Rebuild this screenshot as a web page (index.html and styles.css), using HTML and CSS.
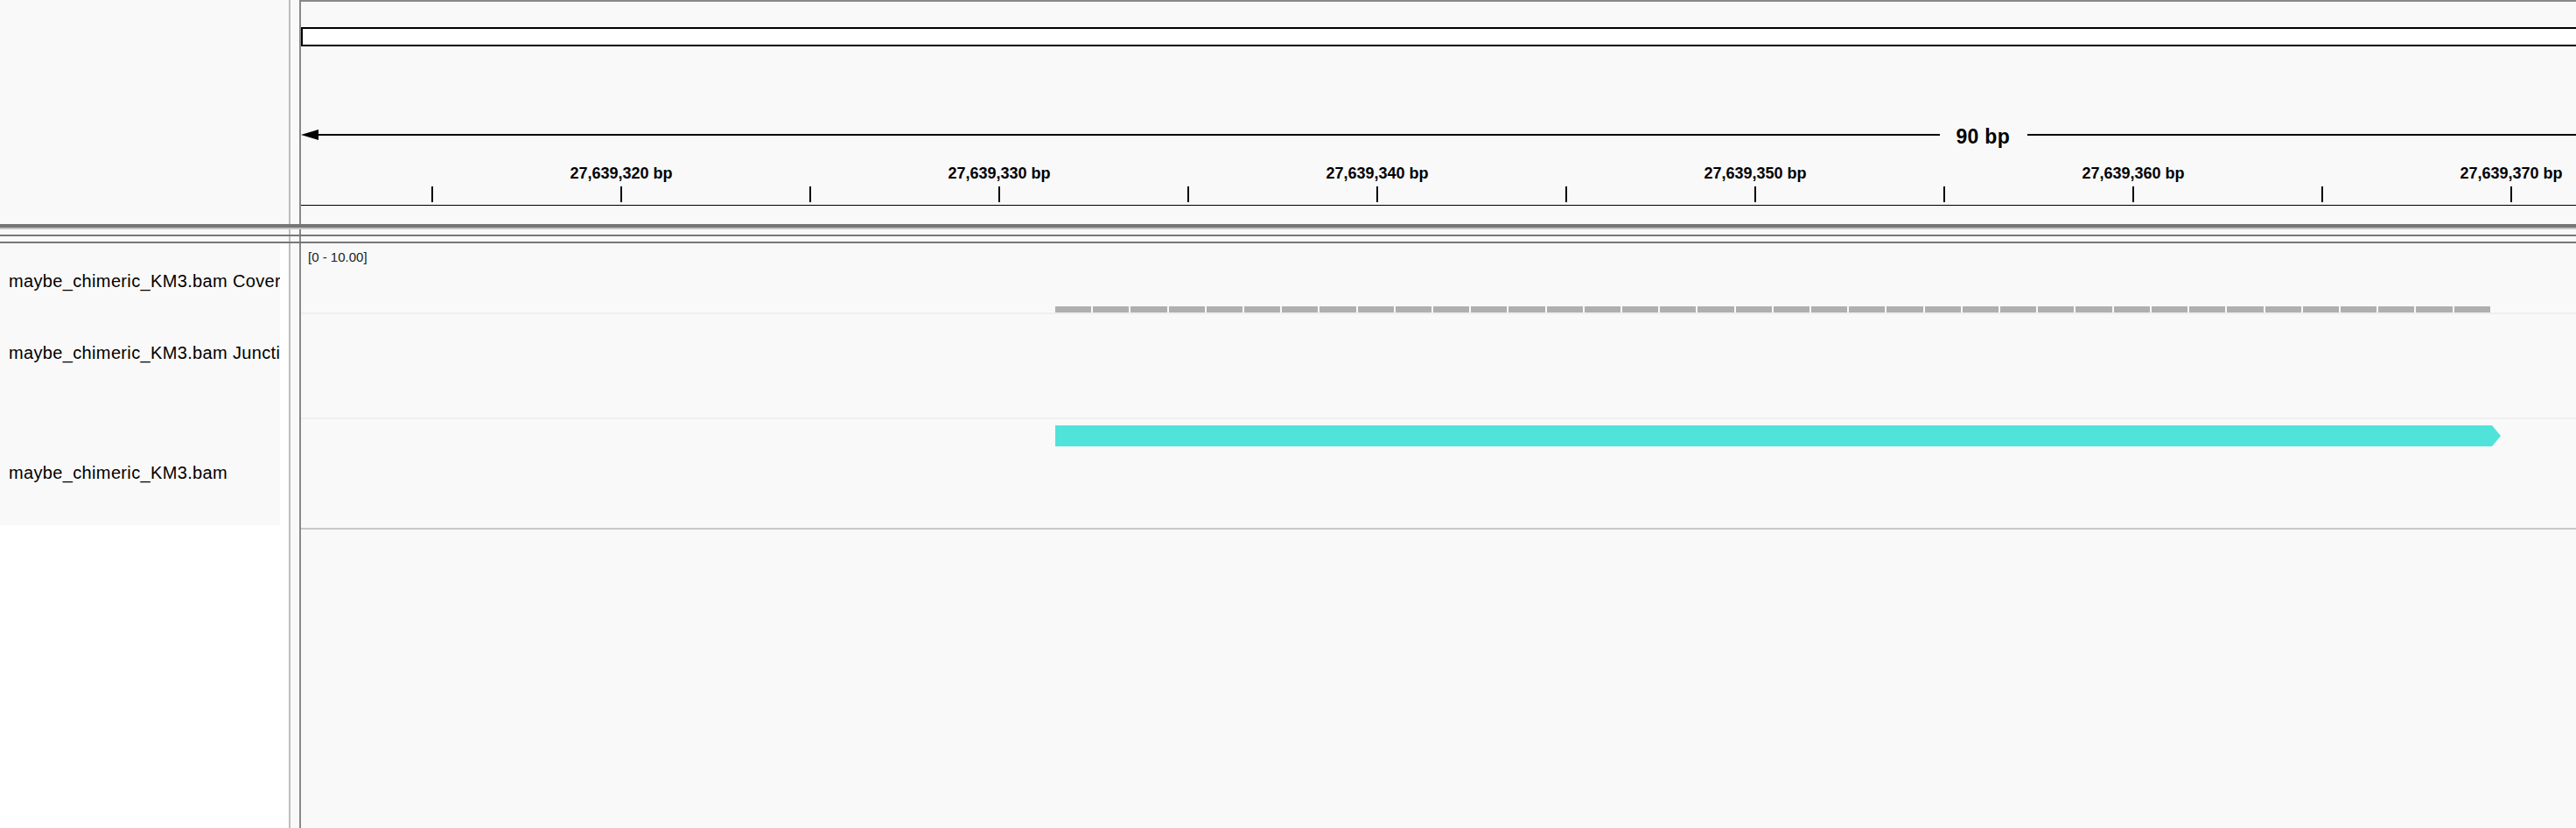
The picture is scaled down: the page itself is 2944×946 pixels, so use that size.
FILE: index.html
```html
<!DOCTYPE html>
<html lang="en">
<head>
<meta charset="utf-8">
<title>IGV</title>
<link rel="stylesheet" href="styles.css">
</head>
<body>
<div class="app">
  <section class="row header">
    <div class="name-col"></div>
    <div class="vl-light"></div>
    <div class="gutter"></div>
    <div class="vl-dark"></div>
    <div class="ruler">
      <div class="ideogram"></div>
      <div class="scale">
        <svg class="arrowhead" width="20" height="12" viewBox="0 0 20 12"><polygon points="0,6 20,0 20,12" fill="#000"/></svg>
        <div class="scale-line"></div>
        <div class="scale-label">90 bp</div>
        <div class="scale-line"></div>
        <svg class="arrowhead" width="20" height="12" viewBox="0 0 20 12"><polygon points="20,6 0,0 0,12" fill="#000"/></svg>
      </div>
      <div class="labels">
        <div class="lab">27,639,320 bp</div>
        <div class="lab">27,639,330 bp</div>
        <div class="lab">27,639,340 bp</div>
        <div class="lab">27,639,350 bp</div>
        <div class="lab">27,639,360 bp</div>
        <div class="lab">27,639,370 bp</div>
      </div>
      <div class="ticks">
        <div class="tick"></div><div class="tick"></div><div class="tick"></div><div class="tick"></div>
        <div class="tick"></div><div class="tick"></div><div class="tick"></div><div class="tick"></div>
        <div class="tick"></div><div class="tick"></div><div class="tick"></div><div class="tick"></div>
      </div>
      <div class="rule"></div>
    </div>
  </section>

  <div class="hl thick"></div>
  <div class="hl soft"></div>
  <div class="row spacer"><div class="name-col"></div><div class="vl-light"></div><div class="gutter"></div><div class="vl-dark"></div><div class="data-bg"></div></div>
  <div class="hl"></div>
  <div class="row spacer"><div class="name-col"></div><div class="vl-light"></div><div class="gutter"></div><div class="vl-dark"></div><div class="data-bg"></div></div>
  <div class="hl"></div>

  <section class="row tracks">
    <div class="names">
      <div class="name-list">
        <div class="name name-cov">maybe_chimeric_KM3.bam Coverage</div>
        <div class="name name-junc">maybe_chimeric_KM3.bam Junctions</div>
        <div class="name name-aln">maybe_chimeric_KM3.bam</div>
      </div>
    </div>
    <div class="vl-light"></div>
    <div class="gutter"></div>
    <div class="vl-dark"></div>
    <div class="data">
      <div class="cov">
        <div class="range">[0 - 10.00]</div>
        <div class="cov-bars">
          <span></span><span></span><span></span><span></span><span></span><span></span><span></span><span></span><span></span><span></span>
          <span></span><span></span><span></span><span></span><span></span><span></span><span></span><span></span><span></span><span></span>
          <span></span><span></span><span></span><span></span><span></span><span></span><span></span><span></span><span></span><span></span>
          <span></span><span></span><span></span><span></span><span></span><span></span><span></span><span></span>
        </div>
      </div>
      <div class="sep"></div>
      <div class="junc"></div>
      <div class="sep"></div>
      <div class="aln">
        <div class="read"></div>
      </div>
      <div class="end-line"></div>
    </div>
  </section>
</div>
</body>
</html>
```

FILE: styles.css
```css
html, body {
  margin: 0;
  padding: 0;
  width: 2944px;
  height: 946px;
  overflow: hidden;
  background: #f9f9f9;
  font-family: "Liberation Sans", Arial, Helvetica, sans-serif;
  color: #000;
}

.app {
  width: 2944px;
  height: 946px;
  display: flex;
  flex-direction: column;
  overflow: hidden;
}

.row {
  display: grid;
  grid-template-columns: 330px 2px 10px 2px 2600px;
  flex-shrink: 0;
}

.header { height: 256px; }
.spacer { height: 6px; }
.tracks { height: 668px; }

.name-col { background: #f9f9f9; }
.vl-light { background: #bdbdbd; }
.gutter { background: #f9f9f9; }
.vl-dark { background: #888888; }
.data-bg { background: #f9f9f9; }

.hl {
  height: 2px;
  background: #777777;
  flex-shrink: 0;
}
.hl.thick { height: 4px; background: #767676; }
.hl.soft { height: 2px; background: #c4c4c4; }

/* ruler */
.ruler {
  background: #f9f9f9;
  border-top: 2px solid #888888;
  overflow: hidden;
  display: flex;
  flex-direction: column;
  min-width: 0;
}
.ruler > * { flex-shrink: 0; }

.ideogram {
  margin-top: 29px;
  height: 22px;
  box-sizing: border-box;
  border: 2px solid #000;
  border-right: none;
  background: #ffffff;
}

.scale {
  margin-top: 89px;
  height: 28px;
  width: 3845px;
  display: flex;
  align-items: flex-start;
}
.arrowhead {
  display: block;
  flex: 0 0 20px;
  margin-top: 6px;
}
.scale-line {
  flex: 1;
  height: 2px;
  margin-top: 11px;
  background: #000;
}
.scale-label {
  flex: 0 0 100px;
  box-sizing: border-box;
  padding: 2px 0 0 19px;
  line-height: 24px;
  font-size: 23px;
  font-weight: bold;
  letter-spacing: 0.3px;
  white-space: nowrap;
}

.labels {
  margin-top: 18px;
  height: 20px;
  display: flex;
  padding-left: 150px;
}
.lab {
  flex: 0 0 432px;
  text-align: center;
  font-size: 18px;
  font-weight: bold;
  line-height: 20px;
  white-space: nowrap;
}

.ticks {
  margin-top: 5px;
  height: 18px;
  display: flex;
  padding-left: 149px;
}
.tick {
  flex: 0 0 216px;
  box-sizing: border-box;
  border-left: 2px solid #000;
}

.rule {
  margin-top: 3px;
  height: 1px;
  background: #000;
}

/* track names */
.names {
  background: #ffffff;
  overflow: hidden;
}
.name-list {
  width: 320px;
  background: #f9f9f9;
}
.name {
  box-sizing: border-box;
  padding-left: 10px;
  font-size: 20px;
  letter-spacing: 0.35px;
  line-height: 23px;
  white-space: nowrap;
  overflow: hidden;
}
.name-cov { height: 81px; padding-top: 32px; }
.name-junc { height: 120px; padding-top: 33px; }
.name-aln { height: 121px; padding-top: 50px; }

/* data tracks */
.data {
  background: #f9f9f9;
  display: flex;
  flex-direction: column;
  overflow: hidden;
  min-width: 0;
}
.data > * { flex-shrink: 0; }

.cov {
  height: 79px;
  box-sizing: border-box;
  padding: 7px 0 0 8px;
  display: flex;
  flex-direction: column;
  justify-content: space-between;
}
.range {
  font-size: 15px;
  line-height: 17px;
  color: #222;
}
.cov-bars {
  display: flex;
  gap: 2px;
  height: 7px;
  width: 1640px;
  margin-left: 854px;
}
.cov-bars span {
  flex: 1;
  background: #afafaf;
}

.sep {
  height: 2px;
  background: #efefef;
}
.junc { height: 118px; }

.aln {
  height: 124px;
  box-sizing: border-box;
  padding-top: 7px;
}
.read {
  margin-left: 862px;
  width: 1652px;
  height: 24px;
  background: #4fe3da;
  clip-path: polygon(0 0, calc(100% - 10px) 0, 100% 50%, calc(100% - 10px) 100%, 0 100%);
}

.end-line {
  height: 2px;
  background: #c8c8c8;
}
```
